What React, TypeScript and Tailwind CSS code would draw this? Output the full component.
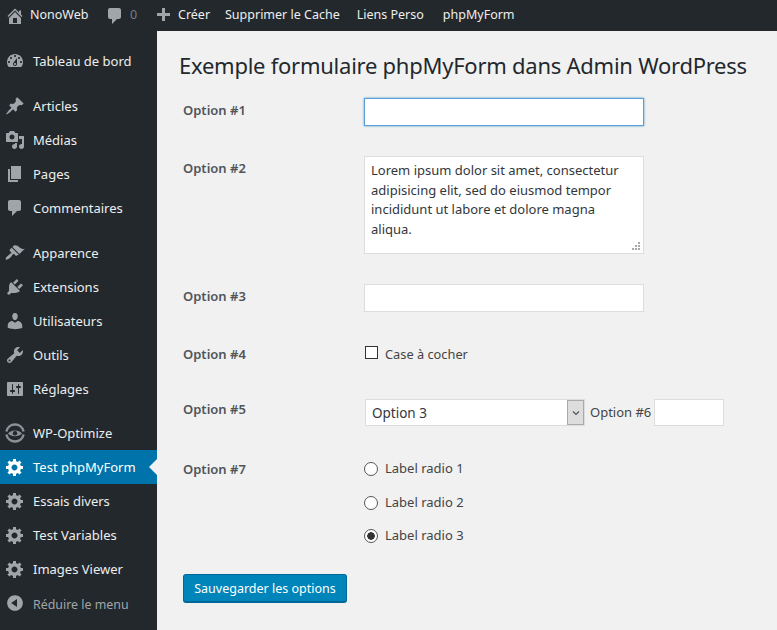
import React from 'react';

const icons = {
  home: "M16 8.5l1.53 1.53-1.06 1.06L10 4.62l-6.47 6.47-1.06-1.06L10 2.5l4 4v-2h2v4zm-6-2.46l6 5.99V18H4v-5.97zM12 17v-5H8v5h4z",
  comment: "M5 2h9c1.1 0 2 .9 2 2v7c0 1.1-.9 2-2 2h-2l-5 5v-5H5c-1.1 0-2-.9-2-2V4c0-1.1.9-2 2-2z",
  plus: "M17 7v3h-5v5H9v-5H4V7h5V2h3v5h5z",
  dashboard: "M3.76 16h12.48c1.1-1.37 1.76-3.11 1.76-5 0-4.42-3.58-8-8-8s-8 3.58-8 8c0 1.89.66 3.63 1.76 5zM10 4c.55 0 1 .45 1 1s-.45 1-1 1-1-.45-1-1 .45-1 1-1zM6 6c.55 0 1 .45 1 1s-.45 1-1 1-1-.45-1-1 .45-1 1-1zm8 0c.55 0 1 .45 1 1s-.45 1-1 1-1-.45-1-1 .45-1 1-1zm-5.37 5.55L12 7v6c0 1.1-.9 2-2 2s-2-.9-2-2c0-.57.24-1.08.63-1.45zM4 10c.55 0 1 .45 1 1s-.45 1-1 1-1-.45-1-1 .45-1 1-1zm12 0c.55 0 1 .45 1 1s-.45 1-1 1-1-.45-1-1 .45-1 1-1zm-5 3c0-.55-.45-1-1-1s-1 .45-1 1 .45 1 1 1 1-.45 1-1z",
  pin: "M10.44 3.02l1.82-1.82 6.36 6.35-1.83 1.82c-1.05-.68-2.48-.57-3.41.36l-.75.75c-.92.93-1.04 2.35-.35 3.41l-1.83 1.82-2.41-2.41-2.8 2.79c-.42.42-3.38 2.71-3.8 2.29s1.86-3.39 2.28-3.81l2.79-2.79L4.1 9.36l1.83-1.82c1.05.69 2.48.57 3.4-.36l.75-.75c.93-.92 1.05-2.35.36-3.41z",
  media: "M13 11V4c0-.55-.45-1-1-1h-1.67L9 1H5L3.67 3H2c-.55 0-1 .45-1 1v7c0 .55.45 1 1 1h10c.55 0 1-.45 1-1zM7 4.5c1.38 0 2.5 1.12 2.5 2.5S8.38 9.5 7 9.5 4.5 8.38 4.5 7 5.62 4.5 7 4.5zM14 6h5v10.5c0 1.38-1.12 2.5-2.5 2.5S14 17.88 14 16.5s1.12-2.5 2.5-2.5c.17 0 .34.02.5.05V9h-3V6zm-4 8.05V13h2v3.5c0 1.38-1.12 2.5-2.5 2.5S7 17.88 7 16.5 8.12 14 9.5 14c.17 0 .34.02.5.05z",
  page: "M6 15V2h10v13H6zm-1 1h8v2H3V5h2v11z",
  appearance: "M14.48 11.06L7.41 3.99l1.5-1.5c.5-.56 2.3-.47 3.51.32 1.21.8 1.43 1.28 2.91 2.1 1.18.64 2.45 1.26 4.45.85zm-.71.71L6.7 4.7 4.93 6.47c-.39.39-.39 1.02 0 1.41l1.06 1.06c.39.39.39 1.03 0 1.42-.6.6-1.43 1.11-2.21 1.69-.35.26-.7.53-1.01.84C1.43 13.23.18 15.96.77 16.55s3.32-.66 4.66-2c.31-.31.58-.66.84-1.01.58-.78 1.09-1.61 1.69-2.21.39-.39 1.02-.39 1.41 0l1.06 1.06c.39.39 1.02.39 1.41 0z",
  plugin: "M13.11 4.36L9.87 7.6 8 5.73l3.24-3.24c.35-.34 1.05-.2 1.56.32.52.51.66 1.21.31 1.55zm-8 1.77l.91-1.12 9.01 9.01-1.19.84c-.71.71-2.63 1.16-3.82 1.16H6.14L4.9 17.26c-.59.59-1.54.59-2.12 0-.59-.58-.59-1.53 0-2.12l1.24-1.24v-3.88c0-1.13.4-3.19 1.09-3.89zm7.26 3.97l3.24-3.24c.34-.35 1.04-.21 1.55.31.52.51.66 1.21.31 1.55l-3.24 3.25z",
  users: "M10 9.25c-2.27 0-2.73-3.44-2.73-3.44C7 4.02 7.82 2 9.97 2c2.16 0 2.98 2.02 2.71 3.81 0 0-.41 3.44-2.68 3.44zm0 2.57L12.72 10c2.39 0 4.52 2.33 4.52 4.53v2.49s-3.65 1.13-7.24 1.13c-3.65 0-7.24-1.13-7.24-1.13v-2.49c0-2.25 1.94-4.48 4.47-4.48z",
  tools: "M16.68 9.77c-1.34 1.34-3.3 1.67-4.95.99l-5.41 6.52c-.99.99-2.59.99-3.58 0s-.99-2.59 0-3.57l6.52-5.42c-.68-1.65-.35-3.61.99-4.95 1.28-1.28 3.12-1.62 4.72-1.06l-2.89 2.89 2.82 2.82 2.86-2.87c.53 1.58.18 3.39-1.08 4.65zM3.81 16.21c.4.39 1.04.39 1.43 0 .4-.4.4-1.04 0-1.43-.39-.4-1.03-.4-1.43 0-.39.39-.39 1.03 0 1.43z",
  settings: "M18 16V4c0-.55-.45-1-1-1H3c-.55 0-1 .45-1 1v12c0 .55.45 1 1 1h14c.55 0 1-.45 1-1zM8 11h1c.55 0 1 .45 1 1s-.45 1-1 1H8v1.5c0 .28-.22.5-.5.5s-.5-.22-.5-.5V13H6c-.55 0-1-.45-1-1s.45-1 1-1h1V5.5c0-.28.22-.5.5-.5s.5.22.5.5V11zm5-2h-1c-.55 0-1-.45-1-1s.45-1 1-1h1V5.5c0-.28.22-.5.5-.5s.5.22.5.5V7h1c.55 0 1 .45 1 1s-.45 1-1 1h-1v5.5c0 .28-.22.5-.5.5s-.5-.22-.5-.5V9z",
  gear: "M18 12h-2.18c-.17.7-.44 1.35-.81 1.93l1.54 1.54-2.1 2.1-1.54-1.54c-.58.36-1.23.63-1.91.79V19H8v-2.18c-.68-.16-1.33-.43-1.91-.79l-1.54 1.54-2.12-2.12 1.54-1.54c-.36-.58-.63-1.23-.79-1.91H1V9.03h2.17c.16-.7.44-1.35.8-1.94L2.43 5.55l2.1-2.1 1.54 1.54c.58-.37 1.24-.64 1.93-.81V2h3v2.18c.68.16 1.33.43 1.91.79l1.54-1.54 2.12 2.12-1.54 1.54c.36.59.64 1.24.8 1.94H18V12zm-8.5 1.5c1.66 0 3-1.34 3-3s-1.34-3-3-3-3 1.34-3 3 1.34 3 3 3z",
  collapse: "M10 2.16c4.33 0 7.84 3.51 7.84 7.84s-3.51 7.84-7.84 7.84S2.16 14.33 2.16 10 5.71 2.16 10 2.16zm2 11.72V6.12L6.18 9.97z",
};

type IconName = keyof typeof icons;

const Dash = ({ name, className }: { name: IconName; className: string }) => (
  <svg viewBox="0 0 20 20" className={className} fill="currentColor">
    <path d={icons[name]} />
  </svg>
);

const OptimizeIcon = () => (
  <svg viewBox="0 0 20 20" className="w-5 h-5 text-[#8c9196]" fill="none" stroke="currentColor">
    <path d="M1.4 8.5A8.8 8.8 0 0 1 18.6 8.5" strokeWidth="2.4" />
    <path d="M18.6 11.5A8.8 8.8 0 0 1 1.4 11.5" strokeWidth="2.4" />
    <path d="M3 10.5C6 6.5 14 6.5 17 10.5C14 14 6 14 3 10.5Z" fill="currentColor" stroke="none" />
    <circle cx="10" cy="10.2" r="2.2" fill="#23282d" stroke="none" />
  </svg>
);

const Row = ({ icon, label, active, custom, className }: { icon?: IconName; label: string; active?: boolean; custom?: React.ReactNode; className?: string }) => (
  <li className={`relative h-[34px] flex items-center pl-[5px] text-[13px] ${active ? 'bg-[#0073aa] text-white' : 'text-[#eeeeee]'} ${className ?? ''}`}>
    <span className="w-[28px] flex shrink-0">
      {custom ?? (icon && <Dash name={icon} className={`w-[20px] h-[20px] ${active ? 'text-white' : 'text-[#a0a5aa]'}`} />)}
    </span>
    <span className="pt-[2px]">{label}</span>
    {active && <span className="absolute right-0 top-[9px] border-y-[8px] border-r-[8px] border-y-transparent border-r-[#f1f1f1]" />}
  </li>
);

const Label = ({ children }: { children: React.ReactNode }) => (
  <div className="font-semibold text-[13px] leading-[20px] text-[#50555a]">{children}</div>
);

const Radio = ({ label, checked }: { label: string; checked?: boolean }) => (
  <label className="flex items-center h-[20px] text-[13px] text-[#444]">
    <input type="radio" name="opt7" readOnly checked={!!checked} className="appearance-none w-[14px] h-[14px] mr-[7px] rounded-full border border-[#555] bg-white flex items-center justify-center checked:bg-[radial-gradient(circle,#333_0_3.5px,#fff_4px)]" />
    {label}
  </label>
);

export default function App() {
  return (
    <div className="w-[777px] h-[630px] overflow-hidden bg-[#f1f1f1] flex flex-col font-['Noto_Sans','Open_Sans',sans-serif]">
      <header className="h-[31px] shrink-0 bg-[#23282d] flex items-center text-[12.5px] text-[#eeeeee]">
        <Dash name="home" className="w-5 h-5 ml-[5px] mr-[5px] text-[#a0a5aa]" />
        <span className="w-[58px]">NonoWeb</span>
        <Dash name="comment" className="w-5 h-5 ml-[17px] text-[#a0a5aa]" />
        <span className="ml-[5px] w-[8px] text-[#777c82]">0</span>
        <Dash name="plus" className="w-5 h-5 ml-[15px] mr-[5px] text-[#a0a5aa]" />
        <span className="w-[31px]">Créer</span>
        <span className="ml-[16px]">Supprimer le Cache</span>
        <span className="ml-[17px]">Liens Perso</span>
        <span className="ml-[19px]">phpMyForm</span>
      </header>
      <div className="flex flex-1 min-h-0">
        <aside className="w-[157px] shrink-0 bg-[#23282d]">
          <ul className="pt-[13px]">
            <Row icon="dashboard" label="Tableau de bord" className="mb-[11px]" />
            <Row icon="pin" label="Articles" />
            <Row icon="media" label="Médias" />
            <Row icon="page" label="Pages" />
            <Row icon="comment" label="Commentaires" className="mb-[11px]" />
            <Row icon="appearance" label="Apparence" />
            <Row icon="plugin" label="Extensions" />
            <Row icon="users" label="Utilisateurs" />
            <Row icon="tools" label="Outils" />
            <Row icon="settings" label="Réglages" className="mb-[10px]" />
            <Row custom={<OptimizeIcon />} label="WP-Optimize" />
            <Row icon="gear" label="Test phpMyForm" active />
            <Row icon="gear" label="Essais divers" />
            <Row icon="gear" label="Test Variables" />
            <Row icon="gear" label="Images Viewer" />
            <li className="h-[34px] flex items-center pl-[5px] text-[12.4px] text-[#a0a5aa]">
              <span className="w-[28px] flex shrink-0"><Dash name="collapse" className="w-5 h-5" /></span>
              <span className="pt-[4px]">Réduire le menu</span>
            </li>
          </ul>
        </aside>
        <main className="flex-1 min-w-0 pl-[22px] pt-[19px]">
          <h1 className="text-[22px] tracking-[-0.25px] leading-[30px] text-[#23282d] whitespace-nowrap">Exemple formulaire phpMyForm dans Admin WordPress</h1>
          <div className="pl-[4px] mt-[18px] grid grid-cols-[181px_1fr]">
            <div className="pt-[2px]"><Label>Option #1</Label></div>
            <div className="h-[58px]">
              <input type="text" className="block w-[280px] h-[28px] bg-white border border-[#5b9dd9] shadow-[0_0_2px_rgba(30,140,190,0.8)] outline-none" />
            </div>

            <div className="pt-[2px]"><Label>Option #2</Label></div>
            <div className="h-[128px] relative">
              <textarea
                readOnly
                defaultValue="Lorem ipsum dolor sit amet, consectetur adipisicing elit, sed do eiusmod tempor incididunt ut labore et dolore magna aliqua."
                className="block w-[280px] h-[98px] bg-white border border-[#dddddd] resize-none outline-none pl-[6px] pr-[7px] py-[4px] text-[13px] leading-[19.6px] text-[#32373c]"
              />
              <svg viewBox="0 0 8 8" className="absolute left-[268px] top-[86px] w-[8px] h-[8px] text-[#aaa]" fill="currentColor">
                <rect x="6" y="0" width="2" height="2" /><rect x="3" y="3" width="2" height="2" /><rect x="6" y="3" width="2" height="2" />
                <rect x="0" y="6" width="2" height="2" /><rect x="3" y="6" width="2" height="2" /><rect x="6" y="6" width="2" height="2" />
              </svg>
            </div>

            <div className="pt-[2px]"><Label>Option #3</Label></div>
            <div className="h-[58px]">
              <input type="text" className="block w-[280px] h-[28px] bg-white border border-[#dddddd] outline-none" />
            </div>

            <div className="pt-[2px]"><Label>Option #4</Label></div>
            <label className="h-[57px] flex items-start pt-[2px] pl-[1px] text-[12.8px] leading-[20px] text-[#444]">
              <input type="checkbox" className="appearance-none w-[13px] h-[13px] mt-[2px] mr-[7px] bg-white border border-[#333]" />
              Case à cocher
            </label>

            <div><Label>Option #5</Label></div>
            <div className="h-[59px] flex items-start">
              <div className="w-[220px] h-[27px] ml-[1px] bg-white border border-[#dddddd] flex items-stretch text-[13.5px] text-[#32373c]">
                <span className="flex-1 pl-[6px] leading-[27px]">Option 3</span>
                <span className="w-[17px] bg-[#dddddd] border border-[#aaaaaa] flex items-center justify-center">
                  <svg viewBox="0 0 10 10" className="w-[10px] h-[10px]" fill="none" stroke="#555" strokeWidth="1.2"><path d="M2 3.5l3 3 3-3" /></svg>
                </span>
              </div>
              <span className="ml-[5px] mr-[3px] text-[13px] leading-[27px] text-[#444]">Option #6</span>
              <input type="text" className="block w-[70px] h-[27px] bg-white border border-[#dddddd] outline-none" />
            </div>

            <div className="pt-[1px]"><Label>Option #7</Label></div>
            <div className="flex flex-col gap-[13.5px] h-[116px] pt-[1px]">
              <Radio label="Label radio 1" />
              <Radio label="Label radio 2" />
              <Radio label="Label radio 3" checked />
            </div>
          </div>
          <button className="ml-[4px] h-[29px] w-[164px] pt-[2px] rounded-[3px] bg-[#0085ba] border border-[#006799] border-b-2 text-[12.5px] text-white">Sauvegarder les options</button>
        </main>
      </div>
    </div>
  );
}
